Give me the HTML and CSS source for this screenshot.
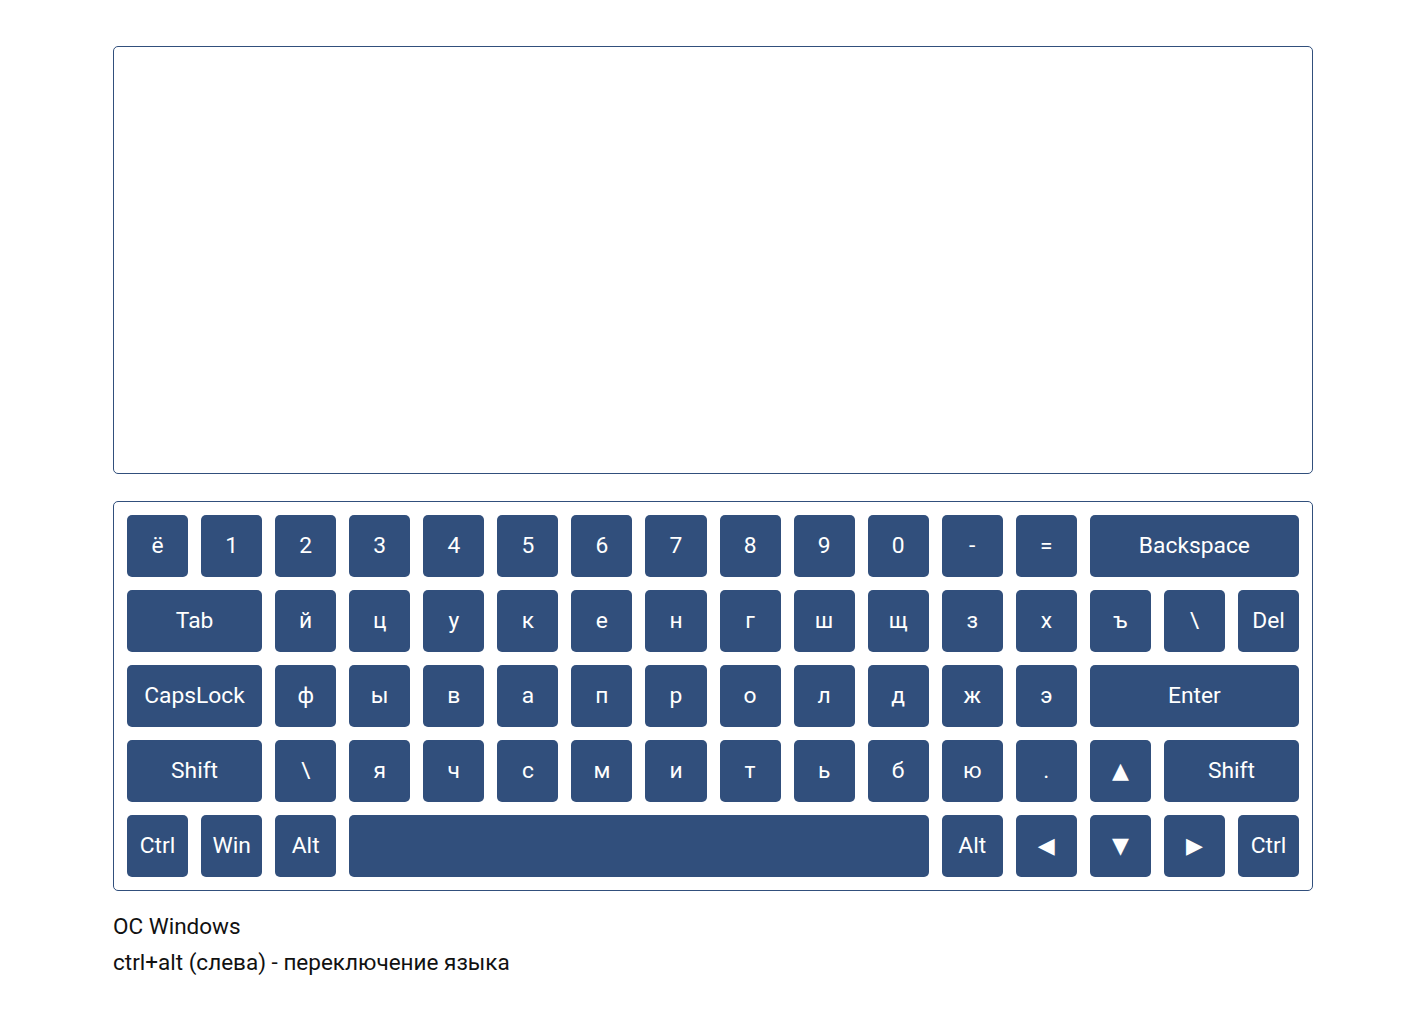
FILE: index.html
```html
<!DOCTYPE html>
<html lang="ru">

<head>
    <meta charset="UTF-8">
    <title>Виртуальная клавиатура</title>
    <link rel="stylesheet" href="styles.css">
</head>

<body>
    <div class="page">
        <!-- Text output -->
        <textarea class="output" id="output"></textarea>

        <!-- Keyboard -->
        <div class="keyboard">
            <div class="key">ё</div>
            <div class="key">1</div>
            <div class="key">2</div>
            <div class="key">3</div>
            <div class="key">4</div>
            <div class="key">5</div>
            <div class="key">6</div>
            <div class="key">7</div>
            <div class="key">8</div>
            <div class="key">9</div>
            <div class="key">0</div>
            <div class="key">-</div>
            <div class="key">=</div>
            <div class="key w3">Backspace</div>

            <div class="key w2">Tab</div>
            <div class="key">й</div>
            <div class="key">ц</div>
            <div class="key">у</div>
            <div class="key">к</div>
            <div class="key">е</div>
            <div class="key">н</div>
            <div class="key">г</div>
            <div class="key">ш</div>
            <div class="key">щ</div>
            <div class="key">з</div>
            <div class="key">х</div>
            <div class="key">ъ</div>
            <div class="key">\</div>
            <div class="key">Del</div>

            <div class="key w2">CapsLock</div>
            <div class="key">ф</div>
            <div class="key">ы</div>
            <div class="key">в</div>
            <div class="key">а</div>
            <div class="key">п</div>
            <div class="key">р</div>
            <div class="key">о</div>
            <div class="key">л</div>
            <div class="key">д</div>
            <div class="key">ж</div>
            <div class="key">э</div>
            <div class="key w3">Enter</div>

            <div class="key w2">Shift</div>
            <div class="key">\</div>
            <div class="key">я</div>
            <div class="key">ч</div>
            <div class="key">с</div>
            <div class="key">м</div>
            <div class="key">и</div>
            <div class="key">т</div>
            <div class="key">ь</div>
            <div class="key">б</div>
            <div class="key">ю</div>
            <div class="key">.</div>
            <div class="key arrow">&#9650;</div>
            <div class="key w2">Shift</div>

            <div class="key">Ctrl</div>
            <div class="key">Win</div>
            <div class="key">Alt</div>
            <div class="key w8"></div>
            <div class="key">Alt</div>
            <div class="key arrow">&#9664;</div>
            <div class="key arrow">&#9660;</div>
            <div class="key arrow">&#9654;</div>
            <div class="key">Ctrl</div>
        </div>

        <!-- Notes -->
        <div class="notes">
            <p>ОС Windows</p>
            <p>ctrl+alt (слева) - переключение языка</p>
        </div>
    </div>
</body>

</html>
```

FILE: styles.css
```css
body {
    margin: 0;
    font-family: Roboto, 'Liberation Sans', Arial, sans-serif;
    background: #fff;
    color: #111;
}

.page {
    width: 1200px;
    padding: 46px 0 0 113px;
}

.output {
    display: block;
    width: 1200px;
    height: 428px;
    box-sizing: border-box;
    margin: 0 0 27px 0;
    border: 1px solid #314f7c;
    border-radius: 5px;
    resize: none;
    outline: none;
    font-family: inherit;
    font-size: 22px;
}

.keyboard {
    display: grid;
    grid-template-columns: repeat(16, 1fr);
    grid-auto-rows: 62px;
    gap: 13px;
    padding: 13px;
    border: 1px solid #314f7c;
    border-radius: 5px;
}

.key {
    display: flex;
    align-items: center;
    justify-content: center;
    padding-bottom: 2px;
    box-sizing: border-box;
    background: #314f7c;
    color: #fff;
    font-size: 22.8px;
    border-radius: 5px;
    cursor: pointer;
    user-select: none;
}

.key.w2 {
    grid-column: span 2;
}

.key.w3 {
    grid-column: span 3;
}

.key.w8 {
    grid-column: span 8;
}

.key.arrow {
    font-family: 'DejaVu Sans', sans-serif;
    font-size: 22px;
}

.notes {
    margin-top: 17px;
    font-size: 22.5px;
}

.notes p {
    margin: 0;
    line-height: 36px;
}
```
